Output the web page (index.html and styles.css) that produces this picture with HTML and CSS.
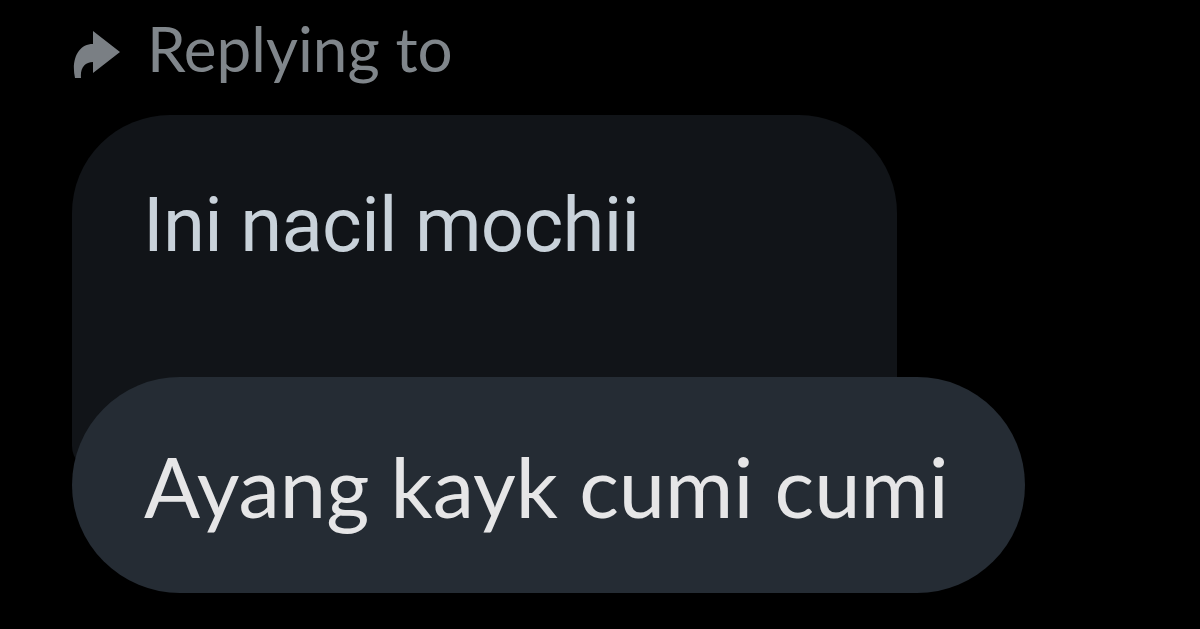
FILE: index.html
```html
<!DOCTYPE html>
<html>
<head>
<meta charset="utf-8">
<link rel="stylesheet" href="styles.css">
</head>
<body>
<div class="page">
  <div class="reply-head">
    <svg class="reply-icon" width="50" height="50" viewBox="0 0 50 50" aria-hidden="true">
      <path d="M21 1 L48 22 L21 43 L21 32 C13 32 8 38 9 48 L3 48 C-1 30 6 14 21 14 Z" fill="#7a7f84"/>
    </svg>
    <span class="reply-label">Replying to</span>
  </div>
  <div class="thread">
    <div class="bubble quoted"><span class="quoted-text">Ini nacil mochii</span></div>
    <div class="bubble reply"><span class="reply-text">Ayang kayk cumi cumi</span></div>
  </div>
</div>
</body>
</html>
```
FILE: styles.css
```css
html, body {
  margin: 0;
  padding: 0;
  background: #000;
}
.page {
  width: 1200px;
  height: 629px;
  overflow: hidden;
  padding: 17px 0 0 72px;
  box-sizing: border-box;
}
.reply-head {
  display: flex;
  align-items: center;
  height: 62px;
}
.reply-icon {
  display: block;
  margin-top: 14px;
  width: 50px;
  height: 50px;
}
.reply-label {
  margin-left: 25px;
  font-family: "Lato", sans-serif;
  font-size: 62px;
  line-height: 62px;
  color: #80868b;
}
.thread {
  margin-top: 36px;
}
.bubble {
  box-sizing: border-box;
}
.quoted {
  width: 825px;
  height: 355px;
  background: #111418;
  border-radius: 98px 98px 0 24px;
  padding: 72px 0 0 71px;
}
.quoted-text {
  font-family: "Roboto", sans-serif;
  font-size: 76px;
  line-height: 76px;
  letter-spacing: -0.7px;
  color: #c9d2da;
  display: block;
}
.reply {
  position: relative;
  margin-top: -93px;
  width: 953px;
  height: 216px;
  background: #252c34;
  border-radius: 108px;
  padding: 68px 0 0 72px;
}
.reply-text {
  display: block;
  font-family: "Lato", sans-serif;
  font-size: 83px;
  line-height: 83px;
  color: #e6e6e7;
}
```
